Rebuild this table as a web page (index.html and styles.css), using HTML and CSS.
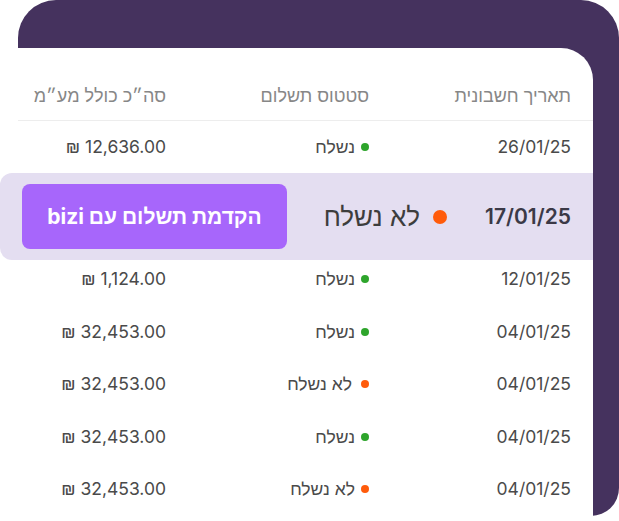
FILE: index.html
```html
<!DOCTYPE html>
<html lang="he">
<head>
<meta charset="utf-8">
<title>חשבוניות</title>
<link rel="stylesheet" href="styles.css">
</head>
<body>
<div class="stage">
  <div class="frame">
    <div class="card" dir="rtl">
      <div class="row head">
        <div class="cell">תאריך חשבונית</div>
        <div class="cell">סטטוס תשלום</div>
        <div class="cell">סה״כ כולל מע״מ</div>
      </div>

      <div class="row">
        <div class="cell num"><span class="ltr">26/01/25</span></div>
        <div class="cell status"><span class="dot ok"></span><span>נשלח</span></div>
        <div class="cell num"><span class="ltr">₪ 12,636.00</span></div>
      </div>

      <div class="hl">
        <div class="hl-date"><span class="ltr">17/01/25</span></div>
        <div class="hl-status"><span class="dot big no"></span><span>לא נשלח</span></div>
        <button class="cta">הקדמת תשלום עם bizi</button>
      </div>

      <div class="row">
        <div class="cell num"><span class="ltr">12/01/25</span></div>
        <div class="cell status"><span class="dot ok"></span><span>נשלח</span></div>
        <div class="cell num"><span class="ltr">₪ 1,124.00</span></div>
      </div>

      <div class="row">
        <div class="cell num"><span class="ltr">04/01/25</span></div>
        <div class="cell status"><span class="dot ok"></span><span>נשלח</span></div>
        <div class="cell num"><span class="ltr">₪ 32,453.00</span></div>
      </div>

      <div class="row">
        <div class="cell num"><span class="ltr">04/01/25</span></div>
        <div class="cell status wide"><span class="dot no"></span><span>לא נשלח</span></div>
        <div class="cell num"><span class="ltr">₪ 32,453.00</span></div>
      </div>

      <div class="row">
        <div class="cell num"><span class="ltr">04/01/25</span></div>
        <div class="cell status"><span class="dot ok"></span><span>נשלח</span></div>
        <div class="cell num"><span class="ltr">₪ 32,453.00</span></div>
      </div>

      <div class="row">
        <div class="cell num"><span class="ltr">04/01/25</span></div>
        <div class="cell status"><span class="dot no"></span><span>לא נשלח</span></div>
        <div class="cell num"><span class="ltr">₪ 32,453.00</span></div>
      </div>
    </div>
  </div>
</div>
</body>
</html>
```

FILE: styles.css
```css
* { box-sizing: border-box; }

html, body {
  margin: 0;
  padding: 0;
  background: #ffffff;
}

body {
  font-family: "Inter", "Liberation Sans", "Open Sans", sans-serif;
  color: #4a4a4a;
  overflow: hidden;
  width: 619px;
  height: 521px;
}

.stage {
  width: 619px;
  height: 521px;
  overflow: hidden;
}

.frame {
  margin-left: 18px;
  width: 601px;
  height: 516px;
  padding-top: 48px;
  background: #45325e;
  border-radius: 38px 38px 28px 0;
}

.card {
  margin-left: -18px;
  width: 593px;
  min-height: 480px;
  background: #ffffff;
  border-top-right-radius: 32px;
  padding-left: 18px;
}

.ltr {
  direction: ltr;
  unicode-bidi: isolate;
}

.row {
  display: grid;
  grid-template-columns: 202px 203px 1fr;
  align-items: center;
  height: 52.5px;
  padding-right: 22px;
  font-size: 17.5px;
  line-height: 24px;
}

.row.head {
  height: 73px;
  padding-top: 36px;
  padding-bottom: 12px;
  align-items: start;
  border-bottom: 1px solid #ededed;
  color: #878787;
  font-size: 18px;
}

.row:nth-child(2) {
  height: 52px;
}

.status {
  display: flex;
  align-items: center;
  gap: 6px;
}

.status.wide {
  gap: 9px;
}

.dot {
  width: 8px;
  height: 8px;
  border-radius: 50%;
  flex: none;
}

.dot.ok { background: #2ea52c; }
.dot.no { background: #ff5b0b; }

.dot.big {
  width: 14px;
  height: 14px;
}

.hl {
  display: flex;
  align-items: center;
  height: 87px;
  margin-left: -18px;
  margin-bottom: -7px;
  padding: 0 22px;
  background: #e4def1;
  border-radius: 12px 0 0 12px;
}

.hl-date {
  font-size: 21px;
  font-weight: 600;
  color: #3b3947;
}

.hl-status {
  display: flex;
  align-items: center;
  gap: 13px;
  margin-right: 38px;
  font-size: 26px;
  color: #3d3d3d;
}

.cta {
  margin-right: auto;
  width: 265px;
  height: 65px;
  border: none;
  border-radius: 8px;
  background: #a766fb;
  color: #ffffff;
  font-family: "Inter", "Liberation Sans", "Open Sans", sans-serif;
  font-size: 21px;
  font-weight: 700;
  direction: rtl;
  padding: 0;
}
```
